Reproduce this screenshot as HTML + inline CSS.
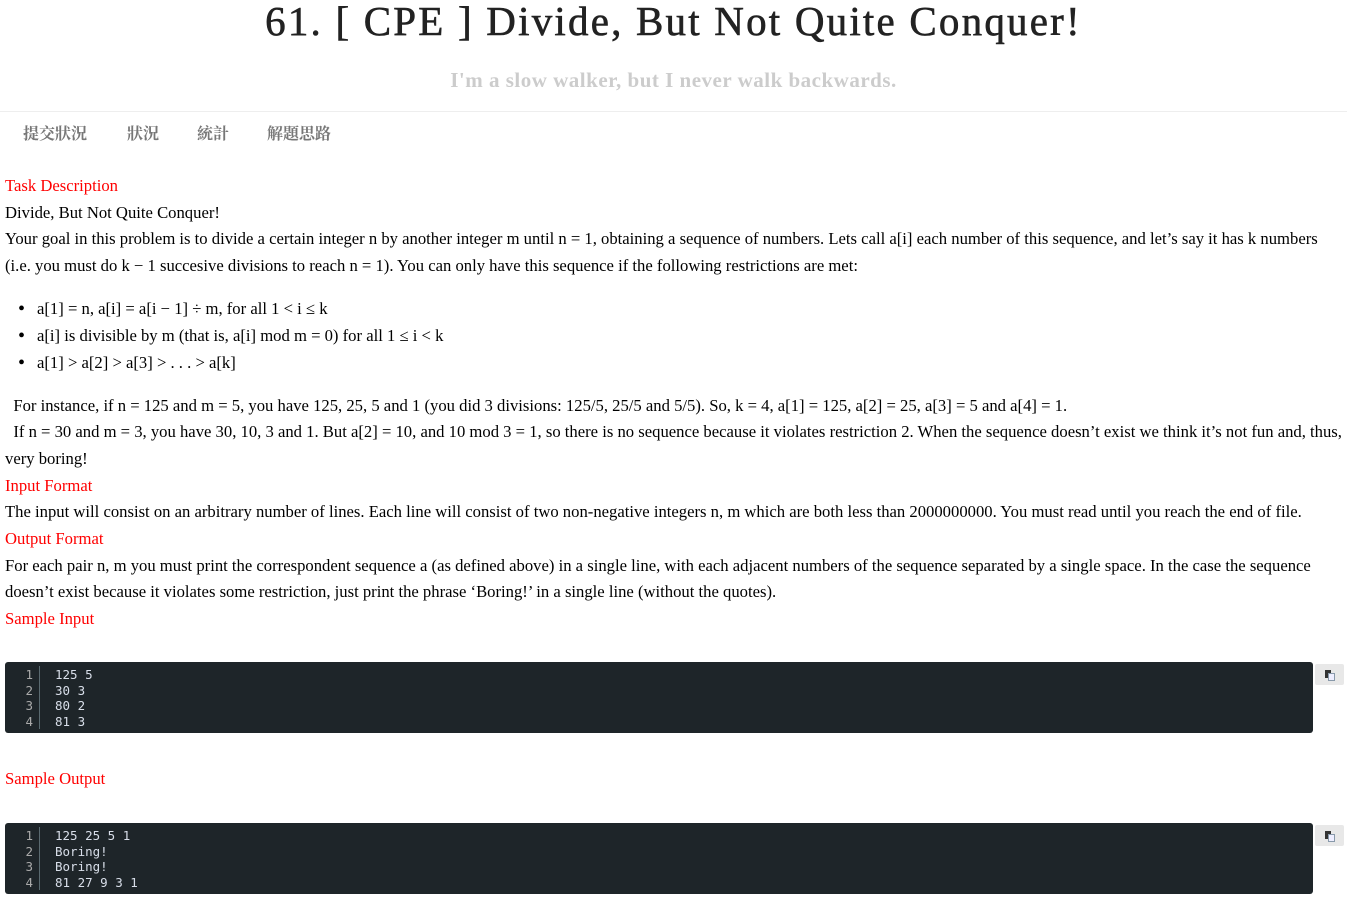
<!DOCTYPE html>
<html><head><meta charset="utf-8"><style>
body{margin:0;width:1347px;height:900px;background:#fff;position:relative;overflow:hidden;font-family:"Liberation Serif","Noto Serif CJK SC",serif;color:#000}
.l{position:absolute;left:5px;font-size:16.65px;line-height:26px;height:26px;white-space:nowrap}
.r{color:#f00}
.b{left:37px}
.dot{position:absolute;left:-19px;top:0;font-size:20px}
h1{position:absolute;top:-1px;left:0;width:1347px;margin:0;text-align:center;font-weight:normal;font-size:41px;line-height:44px;letter-spacing:2.2px;color:#222;-webkit-text-stroke:0.6px #222}
.sub{position:absolute;top:68px;left:0;width:1347px;text-align:center;font-size:21px;font-weight:bold;color:#ccc;letter-spacing:.5px}
.hr{position:absolute;top:111px;left:0;width:1347px;height:1px;background:#eee}
.nav{position:absolute;top:121px;font-family:"Noto Serif CJK SC",serif;font-size:16px;font-weight:bold;color:#777;line-height:24px}
.code{position:absolute;left:5px;width:1308px;height:71px;background:#1e2529;border-radius:3px;font-family:"DejaVu Sans Mono",monospace;font-size:12.5px;color:#d8dee9;line-height:15.5px}
.code .n{position:absolute;left:0;top:5px;width:28px;text-align:right;color:#aaa}
.code .bar{position:absolute;left:34px;top:4px;width:1px;height:63px;background:#5a6a70}
.code .t{position:absolute;left:50px;top:5px;white-space:pre}
.cp{position:absolute;left:1315px;width:29px;height:21px;background:#e8e8e8;border-radius:2px}
.cp i{position:absolute;left:10px;top:6px;width:6px;height:8px;background:#333}
.cp b{position:absolute;left:13px;top:9px;width:5px;height:6px;background:#eef;border:1px solid #89a}
</style></head><body>
<h1>61. [ CPE ] Divide, But Not Quite Conquer!</h1>
<div class="sub">I'm a slow walker, but I never walk backwards.</div>
<div class="hr"></div>
<div class="nav" style="left:23px">提交狀況</div>
<div class="nav" style="left:127px">狀況</div>
<div class="nav" style="left:197px">統計</div>
<div class="nav" style="left:267px">解題思路</div>

<div class="l r" style="top:173px">Task Description</div>
<div class="l" style="top:200px">Divide, But Not Quite Conquer!</div>
<div class="l" style="top:226px">Your goal in this problem is to divide a certain integer n by another integer m until n = 1, obtaining a sequence of numbers. Lets call a[i] each number of this sequence, and let’s say it has k numbers</div>
<div class="l" style="top:253px">(i.e. you must do k − 1 succesive divisions to reach n = 1). You can only have this sequence if the following restrictions are met:</div>
<div class="l b" style="top:296px"><span class="dot">•</span>a[1] = n, a[i] = a[i − 1] ÷ m, for all 1 &lt; i ≤ k</div>
<div class="l b" style="top:323px"><span class="dot">•</span>a[i] is divisible by m (that is, a[i] mod m = 0) for all 1 ≤ i &lt; k</div>
<div class="l b" style="top:350px"><span class="dot">•</span>a[1] &gt; a[2] &gt; a[3] &gt; . . . &gt; a[k]</div>
<div class="l" style="top:393px">&nbsp;&nbsp;For instance, if n = 125 and m = 5, you have 125, 25, 5 and 1 (you did 3 divisions: 125/5, 25/5 and 5/5). So, k = 4, a[1] = 125, a[2] = 25, a[3] = 5 and a[4] = 1.</div>
<div class="l" style="top:419px">&nbsp;&nbsp;If n = 30 and m = 3, you have 30, 10, 3 and 1. But a[2] = 10, and 10 mod 3 = 1, so there is no sequence because it violates restriction 2. When the sequence doesn’t exist we think it’s not fun and, thus,</div>
<div class="l" style="top:446px">very boring!</div>
<div class="l r" style="top:473px">Input Format</div>
<div class="l" style="top:499px">The input will consist on an arbitrary number of lines. Each line will consist of two non-negative integers n, m which are both less than 2000000000. You must read until you reach the end of file.</div>
<div class="l r" style="top:526px">Output Format</div>
<div class="l" style="top:553px">For each pair n, m you must print the correspondent sequence a (as defined above) in a single line, with each adjacent numbers of the sequence separated by a single space. In the case the sequence</div>
<div class="l" style="top:579px">doesn’t exist because it violates some restriction, just print the phrase ‘Boring!’ in a single line (without the quotes).</div>
<div class="l r" style="top:606px">Sample Input</div>

<div class="code" style="top:662px"><div class="n">1<br>2<br>3<br>4</div><div class="bar"></div><div class="t">125 5
30 3
80 2
81 3</div></div>
<div class="cp" style="top:664px"><i></i><b></b></div>

<div class="l r" style="top:766px">Sample Output</div>
<div class="code" style="top:823px"><div class="n">1<br>2<br>3<br>4</div><div class="bar"></div><div class="t">125 25 5 1
Boring!
Boring!
81 27 9 3 1</div></div>
<div class="cp" style="top:825px"><i></i><b></b></div>
</body></html>
